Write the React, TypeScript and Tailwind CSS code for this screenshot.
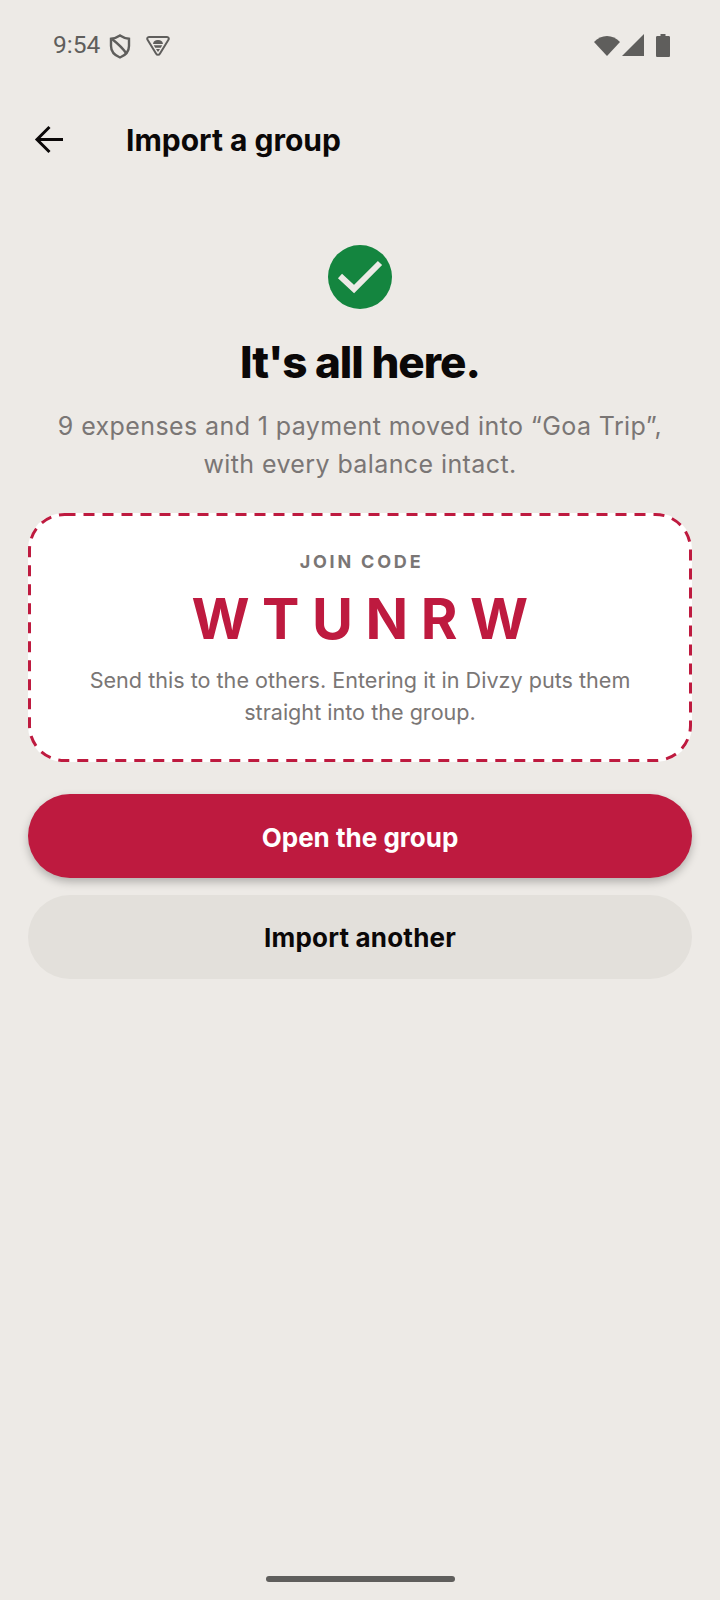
export default function App() {
  return (
    <div className="w-[720px] h-[1600px] bg-[#edeae6] flex flex-col overflow-hidden font-['Inter','Noto_Sans',sans-serif]">
      <div className="h-[92px] pt-[30px] px-[53px] flex items-start justify-between text-[#5f5e5c] shrink-0">
        <div className="flex items-center h-[30px]">
          <span className="font-['Roboto',sans-serif] text-[24.5px] leading-[30px]">9:54</span>
          <svg className="ml-[9px] mt-[3px]" width="22" height="25" viewBox="0 0 22 25" fill="none" stroke="#5f5e5c" strokeWidth="2.4">
            <path d="M11 1.5 C14 3.5 17 4.5 20 4.8 V12 C20 17.5 16 21.5 11 23.5 C6 21.5 2 17.5 2 12 V4.8 C5 4.5 8 3.5 11 1.5 Z" />
            <path d="M3 5 C8 9 13 13 17 19" />
          </svg>
          <svg className="ml-[15px] mt-[1px]" width="24" height="22" viewBox="0 0 24 22" fill="none">
            <path d="M3 2 H21 C22.5 2 23.3 3.5 22.3 5 L14 18.5 C13 20.3 11 20.3 10 18.5 L1.7 5 C0.7 3.5 1.5 2 3 2 Z" stroke="#5f5e5c" strokeWidth="2" />
            <path d="M7 9 C7.5 6 9 5 12 5 C15 5 16.5 6 17 9 Z M7.8 10.3 H16.2 L14.8 12.8 H9.2 Z M10 14 H14 L12 17 Z" fill="#5f5e5c" />
          </svg>
        </div>
        <div className="flex items-center h-[30px] -mr-[3px]">
          <svg width="28" height="22" viewBox="0 0 28 22"><path d="M1 8 C8 0 20 0 27 8 L14 22 Z" fill="#5f5e5c" /></svg>
          <svg className="ml-[1px]" width="22" height="22" viewBox="0 0 22 22"><path d="M22 0 V22 H0 Z" fill="#5f5e5c" /></svg>
          <svg className="ml-[12px]" width="14" height="23" viewBox="0 0 14 23"><path d="M4.5 0 H9.5 V2 H12.5 C13.5 2 14 2.5 14 3.5 V21.5 C14 22.5 13.5 23 12.5 23 H1.5 C0.5 23 0 22.5 0 21.5 V3.5 C0 2.5 0.5 2 1.5 2 H4.5 Z" fill="#5f5e5c" /></svg>
        </div>
      </div>

      <div className="h-[56px] mt-[20px] flex items-center pl-[34px] shrink-0">
        <svg width="30" height="30" viewBox="0 0 30 30" fill="none" stroke="#0b0808" strokeWidth="3">
          <path d="M29 14.5 H3 M15.5 2 L3 14.5 L15.5 27" />
        </svg>
        <span className="ml-[62px] text-[30px] font-bold text-[#0b0808] leading-none">Import a group</span>
      </div>

      <div className="flex flex-col items-center px-[28px] shrink-0">
        <div className="mt-[77px] w-[64px] h-[64px] rounded-full bg-[#14853f] flex items-center justify-center">
          <svg width="46" height="46" viewBox="0 0 46 46" fill="none" stroke="#edeae6" strokeWidth="6">
            <path d="M3 22 L17 35 L43 9" />
          </svg>
        </div>
        <h1 className="mt-[22px] text-[44px] leading-[62px] font-extrabold text-[#0b0808] tracking-[-1px]">It's all here.</h1>
        <p className="mt-[14px] text-[25px] leading-[38px] text-[#7a7675] text-center tracking-[0.4px]">
          9 expenses and 1 payment moved into “Goa Trip”,<br />with every balance intact.
        </p>
        <div className="relative mt-[30px] w-full h-[249px] bg-white rounded-[36px] flex flex-col items-center pt-[37px]">
          <svg className="absolute inset-0" width="664" height="249" viewBox="0 0 664 249" fill="none">
            <rect x="1.5" y="1.5" width="661" height="246" rx="35" stroke="#be1a3f" strokeWidth="3" strokeDasharray="11 8" />
          </svg>
          <div className="pl-[3px] text-[18px] leading-[24px] font-bold tracking-[2.8px] text-[#7a7675]">JOIN CODE</div>
          <div className="mt-[10px] pl-[12px] text-[56px] leading-[70px] font-bold tracking-[12.5px] text-[#be1a3f]">WTUNRW</div>
          <p className="mt-[10px] text-[21.6px] leading-[32px] text-[#7a7675] text-center">
            Send this to the others. Entering it in Divzy puts them<br />straight into the group.
          </p>
        </div>
        <button className="mt-[32px] w-full h-[84px] pt-[2px] rounded-full bg-[#be1a3f] text-white text-[26px] font-bold shadow-[0_4px_8px_rgba(0,0,0,0.25)]">Open the group</button>
        <button className="mt-[17px] w-full h-[84px] pt-[1px] rounded-full bg-[#e3e0db] text-[#0b0808] text-[26px] font-bold tracking-[0.2px]">Import another</button>
      </div>

      <div className="mt-auto mb-[18px] mx-auto w-[189px] h-[6px] rounded-full bg-[#5f5e5c] shrink-0" />
    </div>
  );
}
